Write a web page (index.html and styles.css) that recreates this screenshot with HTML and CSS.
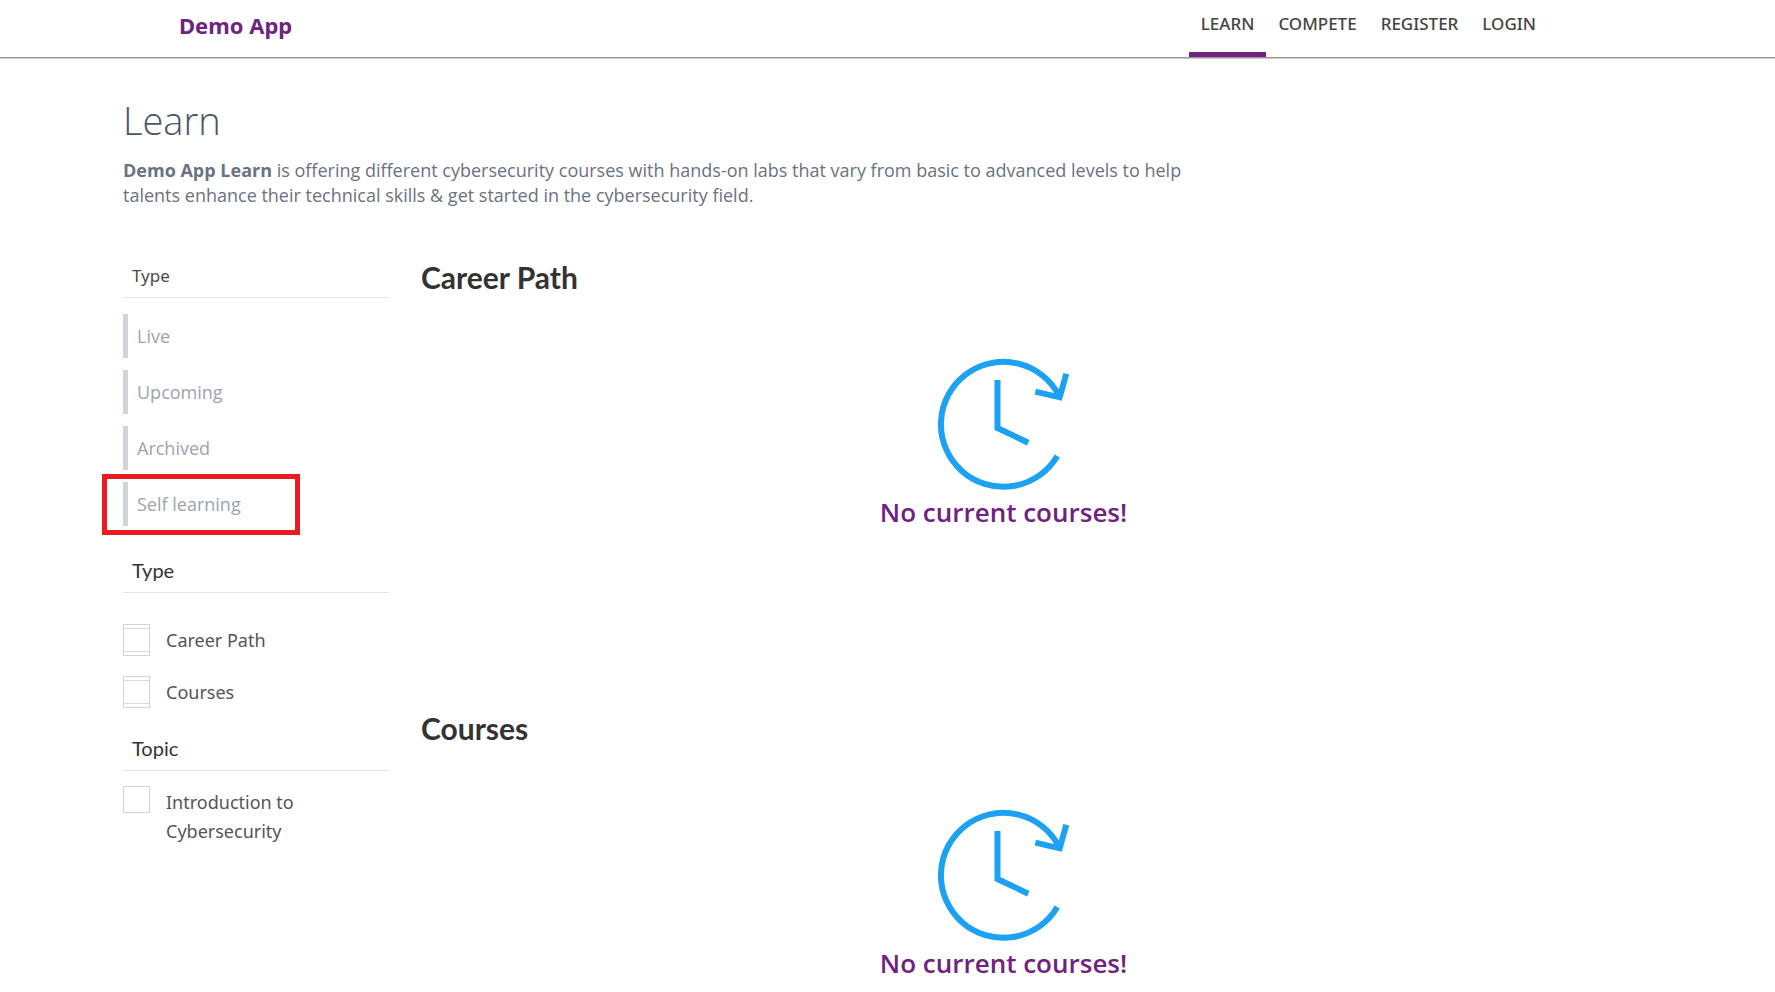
FILE: index.html
```html
<!DOCTYPE html>
<html lang="en">
<head>
<meta charset="utf-8">
<title>Demo App - Learn</title>
<link rel="stylesheet" href="styles.css">
</head>
<body>
<svg class="sprite" aria-hidden="true">
  <symbol id="clock" viewBox="0 0 134 134">
    <path d="M122.3 38.3A62.5 62.5 0 1 0 120.3 98M98.300 33.700L122.700 39.300L129.300 15.700M60.500 22V70L91.300 84.700" fill="none" stroke="currentColor" stroke-width="6"/>
  </symbol>
</svg>
<header class="topbar">
  <a class="brand" href="#">Demo App</a>
  <nav class="nav">
    <a class="nav-link active" href="#">LEARN</a>
    <a class="nav-link" href="#">COMPETE</a>
    <a class="nav-link" href="#">REGISTER</a>
    <a class="nav-link" href="#">LOGIN</a>
  </nav>
</header>
<main class="page">
  <h1 class="title">Learn</h1>
  <p class="intro"><strong>Demo App Learn</strong> is offering different cybersecurity courses with hands-on labs that vary from basic to advanced levels to help talents enhance their technical skills &amp; get started in the cybersecurity field.</p>
  <div class="columns">
    <aside class="sidebar">
      <h2 class="filter-title plain">Type</h2>
      <div class="status-list">
        <button class="status" type="button">Live</button>
        <button class="status" type="button">Upcoming</button>
        <button class="status" type="button">Archived</button>
        <button class="status marked" type="button">Self learning</button>
      </div>
      <h2 class="filter-title">Type</h2>
      <div class="checks kinds">
        <label class="check"><input class="box double" type="checkbox"><span>Career Path</span></label>
        <label class="check"><input class="box double" type="checkbox"><span>Courses</span></label>
      </div>
      <h2 class="filter-title">Topic</h2>
      <div class="checks topics">
        <label class="check top"><input class="box" type="checkbox"><span>Introduction to Cybersecurity</span></label>
      </div>
    </aside>
    <div class="content">
      <section class="group">
        <h2 class="group-title">Career Path</h2>
        <div class="empty"><svg class="clock"><use href="#clock"/></svg><p class="empty-text">No current courses!</p></div>
      </section>
      <section class="group">
        <h2 class="group-title">Courses</h2>
        <div class="empty"><svg class="clock"><use href="#clock"/></svg><p class="empty-text">No current courses!</p></div>
      </section>
    </div>
  </div>
</main>
</body>
</html>
```
FILE: styles.css
```css
*, ::before, ::after { box-sizing: border-box; }
body {
  margin: 0;
  background: #fff;
  color: #555;
  font-family: "Noto Sans", "Open Sans", sans-serif;
  font-size: 18px;
}
h1, h2, p { margin: 0; }
.sprite { display: none; }

.topbar {
  display: flex;
  justify-content: space-between;
  height: 58px;
  padding: 0 227px 0 179px;
  border-bottom: 1px solid #999;
  box-shadow: 0 1px #ccc;
}
.brand {
  color: #6f2282;
  font-size: 22px;
  font-weight: 700;
  line-height: 50px;
  text-decoration: none;
}
.nav { display: flex; }
.nav-link {
  padding: 0 12px;
  border-bottom: 5px solid transparent;
  color: #444;
  font-size: 17px;
  font-weight: 500;
  line-height: 47px;
  text-decoration: none;
}
.nav-link.active { border-bottom-color: #6f2282; }

.page { padding: 38px 189px 0 123px; }
.title {
  color: #4a5568;
  font-family: "Open Sans", sans-serif;
  font-size: 38px;
  font-weight: 300;
  line-height: 48px;
}
.intro {
  max-width: 1080px;
  margin-top: 14px;
  color: #6b7280;
  font-family: "Open Sans", sans-serif;
  line-height: 25px;
}

.columns { display: flex; gap: 32px; margin-top: 46px; }
.sidebar { flex: none; width: 266px; }
.filter-title {
  padding: 0 9px;
  border-bottom: 1px solid #e2e3e7;
  color: #333;
  font-family: Lato, sans-serif;
  font-size: 20px;
  font-weight: 400;
  line-height: 43px;
}
.filter-title.plain { color: #4a4a4a; font-family: "Noto Sans", sans-serif; font-size: 17px; }
.status-list { display: flex; flex-direction: column; gap: 12px; margin: 16px 0 23px; }
.status {
  position: relative;
  height: 44px;
  padding: 0 9px;
  border: 0;
  border-left: 5px solid #d1d5db;
  background: none;
  color: #9ca3af;
  font: inherit;
  font-family: "Open Sans", sans-serif;
  text-align: left;
}
.marked::after {
  content: "";
  position: absolute;
  top: -8px;
  left: -26px;
  width: 198px;
  height: 61px;
  border: 5px solid #e81c1e;
}
.checks { display: flex; flex-direction: column; gap: 20px; }
.kinds { margin: 31px 0 19px; }
.topics { margin-top: 15px; }
.check { display: flex; align-items: center; gap: 16px; line-height: 29px; }
.check.top { align-items: flex-start; }
.check.top span { max-width: 160px; padding-top: 2px; }
.box {
  flex: none;
  appearance: none;
  width: 27px;
  height: 27px;
  margin: 0;
  border: 1px solid #d6d3d0;
  background: #fff;
}
.box.double { height: 32px; }
.box.double::before {
  content: "";
  display: block;
  height: 24px;
  margin-top: 3px;
  border: solid #dedbd7;
  border-width: 1px 0;
}

.content { flex: 1; display: flex; flex-direction: column; gap: 173px; }
.group-title {
  color: #333;
  font-family: Lato, sans-serif;
  font-size: 30px;
  font-weight: 700;
  line-height: 46px;
}
.empty { display: flex; flex-direction: column; align-items: center; padding-top: 58px; }
.clock { width: 134px; height: 134px; color: #1da1f2; }
.empty-text { color: #6f2282; font-family: "Open Sans", sans-serif; font-size: 26px; font-weight: 600; line-height: 40px; }
```
